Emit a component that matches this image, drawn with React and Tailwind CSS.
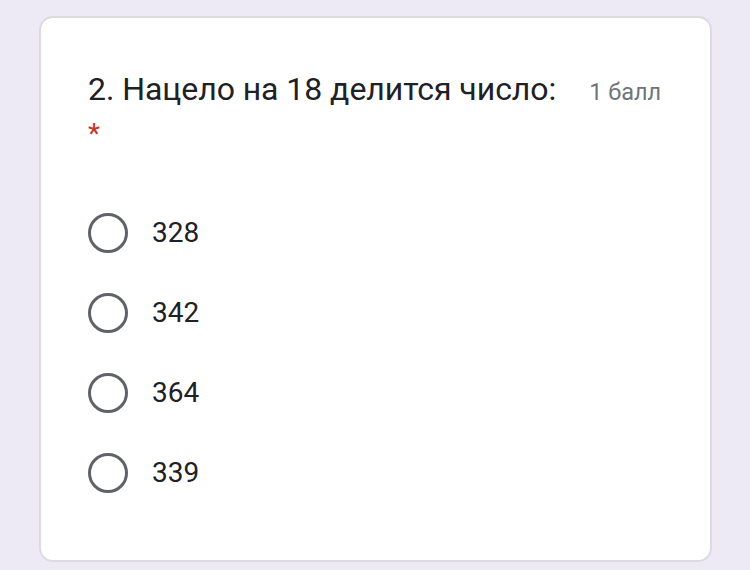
export default function App() {
  const opts = ["328", "342", "364", "339"];
  return (
    <div className="w-[750px] h-[570px] bg-[#edeaf6] pt-[16px] pl-[39px] pr-[38px] pb-[8px]" style={{ fontFamily: "Roboto, 'Noto Sans', sans-serif" }}>
      <div className="h-[546px] bg-white border-2 border-[#dcdbe2] rounded-[14px] pl-[47px] pt-[51px]">
        <div className="flex items-baseline">
          <div className="text-[32px] leading-[40px] text-[#202124] tracking-[-0.05px]">2. Нацело на 18 делится число:</div>
          <div className="ml-[33px] text-[23.5px] text-[#70757a]">1 балл</div>
        </div>
        <div className="text-[28px] leading-[28px] text-[#c8372b] mt-[10px]">*</div>
        <div className="flex flex-col mt-[45px]">
          {opts.map((o) => (
            <div key={o} className="flex items-center h-[80px]">
              <div className="w-[40px] h-[40px] rounded-full border-[3.5px] border-[#5f6368]" />
              <div className="ml-[24px] text-[28px] text-[#202124]">{o}</div>
            </div>
          ))}
        </div>
      </div>
    </div>
  );
}
